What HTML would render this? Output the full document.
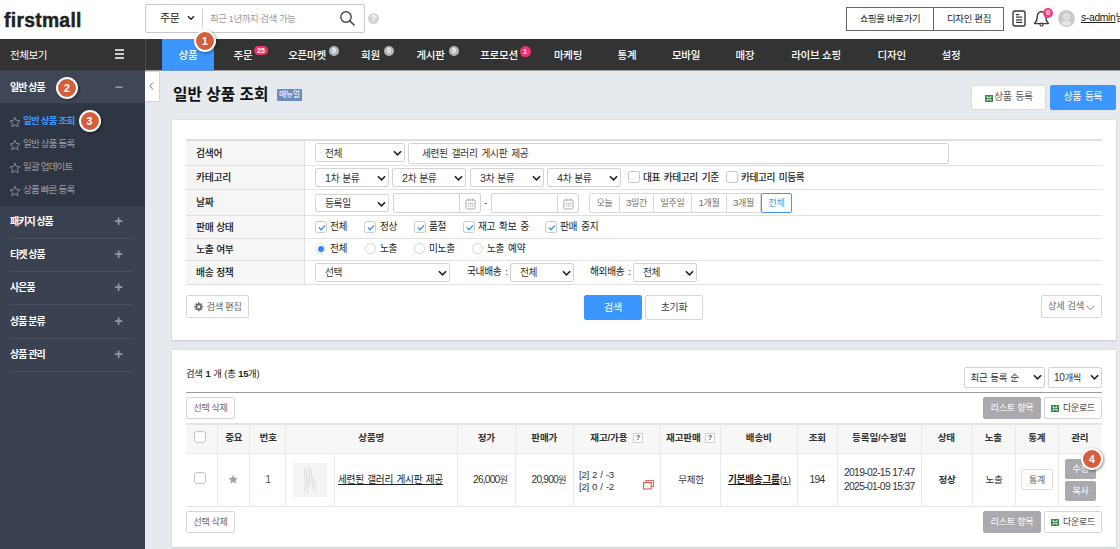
<!DOCTYPE html>
<html lang="ko">
<head>
<meta charset="utf-8">
<title>일반 상품 조회</title>
<style>
*{box-sizing:border-box;margin:0;padding:0}
html,body{width:1120px;height:549px;overflow:hidden;background:#e6e9ed}
body{font-family:"Liberation Sans","Noto Sans CJK KR",sans-serif;font-size:11px;color:#222;position:relative;letter-spacing:-0.3px}
.abs{position:absolute}
/* header */
#hd{position:absolute;left:0;top:0;width:1120px;height:39px;background:#fff}
#logo{position:absolute;left:4px;top:7.5px;font-size:19.3px;font-weight:bold;color:#222;letter-spacing:0.3px;line-height:26px;-webkit-text-stroke:0.45px #222}
#sbox{position:absolute;left:145px;top:4px;width:220px;height:29px;border:1px solid #c8c8c8;border-radius:2px;background:#fff}
#sbox .t1{position:absolute;left:14px;top:0;line-height:27px;font-size:11px;color:#222}
#sbox .car{position:absolute;left:41px;top:9px}
#sbox .sep{position:absolute;left:56px;top:4px;width:1px;height:19px;background:#d0d0d0}
#sbox .ph{position:absolute;left:64px;top:0;line-height:27px;font-size:9.5px;color:#9a9a9a;letter-spacing:-0.5px}
#sbox .mag{position:absolute;left:193px;top:5px}
#help{position:absolute;left:368px;top:13px;width:11px;height:11px;border-radius:50%;background:#d4d4d4;color:#fff;font-size:9px;line-height:11px;text-align:center;font-weight:bold;letter-spacing:0}
#hbtns{position:absolute;left:846px;top:7px;width:158px;height:24px;border:1px solid #666;background:#fff}
#hbtns span{position:absolute;top:0;line-height:22px;font-size:9.4px;text-align:center;color:#222}
#hbtns .a{left:0;width:87px;border-right:1px solid #666;height:22px}
#hbtns .b{left:87px;width:70px}
#uname{position:absolute;left:1081px;top:10.5px;font-size:10.3px;line-height:14px;white-space:nowrap;color:#222}
#uname u{text-decoration:underline}
/* nav */
#nav{position:absolute;left:0;top:39px;width:1120px;height:31px;background:#333}
#nav .vsep{position:absolute;left:145px;top:0;width:1px;height:31px;background:#4c4c4c}
#nav .all{position:absolute;left:10px;top:0;line-height:32px;color:#fff;font-size:10.5px;letter-spacing:-0.4px}
#nav .ham{position:absolute;left:114.5px;top:9.5px}
#nav .it{position:absolute;top:0;height:32px;line-height:32px;color:#fff;font-size:10.5px;white-space:nowrap;transform:translateX(-50%);letter-spacing:-0.25px;font-weight:500}
#nav .on{position:absolute;left:162px;top:0;width:52px;height:31px;background:#3b97ff}
.bdg{position:absolute;top:7px;height:10px;min-width:10px;border-radius:5px;font-size:7px;line-height:10px;color:#fff;text-align:center;font-weight:bold;letter-spacing:0;padding:0 2px}
.bdg.p{background:#f5306e}
.bdg.g{background:#b5b5b5}
/* sidebar */
#side{position:absolute;left:0;top:71px;width:145px;height:478px;background:#3a4150;box-shadow:0 -1px 0 #3f4757}
#side .h1{position:absolute;left:0;top:0;width:145px;height:32px;background:#3f4757}
#side .sub{position:absolute;left:0;top:32px;width:145px;height:103px;background:#2e3543}
#side .m{position:absolute;left:10px;color:#fff;font-size:10px;font-weight:bold;line-height:16px;white-space:nowrap;letter-spacing:-1px}
#side .s{position:absolute;left:23px;color:#9aa0ab;font-size:9.5px;line-height:16px;white-space:nowrap;letter-spacing:-0.8px}
#side .s.act{color:#3b97ff;font-weight:bold}
#side .star{position:absolute;left:8.5px}
#side .pl{position:absolute;left:113.5px;color:#9299a5;font-size:14px;line-height:15px;width:10px;text-align:center;font-weight:bold;letter-spacing:0}
#side .ln{position:absolute;left:10px;width:122px;height:1px;background:#4a5161}
/* annotation circles */
.num{position:absolute;width:22px;height:22px;border-radius:50%;background:#d65f3b;border:2px solid #fff;color:#fff;font-weight:bold;font-size:10.5px;line-height:18px;text-align:center;box-shadow:1px 1px 3px rgba(0,0,0,.45);letter-spacing:0}
/* main */
#fold{position:absolute;left:145px;top:71px;width:15px;height:31px;background:#fff;border:1px solid #d5d5d5;border-left:none;border-radius:0 2px 2px 0}
#title{position:absolute;left:173px;top:83.2px;font-size:15.7px;font-weight:bold;line-height:24px;color:#111;letter-spacing:0;white-space:nowrap}
#manual{position:absolute;left:276.5px;top:88.5px;width:25.5px;height:12px;background:#6a8dc0;color:#fff;font-size:8px;line-height:12px;text-align:center;border-radius:1px;letter-spacing:-0.5px}
.btn{position:absolute;background:#fff;border:1px solid #d6d6d6;border-radius:2px;font-size:10.5px;color:#333;text-align:center;white-space:nowrap}
.btn.blue{background:#3b97ff;border-color:#3b97ff;color:#fff}
.btn.gray{background:#a9a9ae;border-color:#a9a9ae;color:#fff}
.panel{position:absolute;left:172px;width:944px;background:#fff}

.panel{box-shadow:0 0 2px rgba(0,0,0,.10),0 1px 2px rgba(0,0,0,.10)}
.hl{position:absolute;left:186px;width:916px;height:1px;background:#e1e1e1}
.lab{position:absolute;left:186px;width:119px;background:#f6f6f6;border-right:1px solid #e1e1e1}
.lt{position:absolute;left:196px;font-size:9.8px;font-weight:500;color:#111;word-spacing:0.3px;line-height:14px;white-space:nowrap}
.sel{position:absolute;word-spacing:0.6px;height:19px;border:1px solid #d4d4d4;border-radius:2px;background:#fff;font-size:9.7px;line-height:19px;color:#333;padding-left:9px;white-space:nowrap}
.sel svg{position:absolute;right:2px;top:6px}
.inp{position:absolute;word-spacing:1.5px;height:20px;border:1px solid #d4d4d4;border-radius:2px;background:#fff;font-size:9.7px;line-height:18px;color:#333;white-space:nowrap}
.cb{position:absolute;width:11px;height:11px;border:1px solid #c4c4c4;border-radius:2px;background:#fff}
.cb svg{position:absolute;left:1px;top:1.5px}
.rd{position:absolute;width:11px;height:11px;border:1px solid #d4d4d4;border-radius:50%;background:#fff}
.rd.on{border-color:#d9dde3}
.rd.on i{position:absolute;left:1.5px;top:1.5px;width:6px;height:6px;border-radius:50%;background:#2f86f6;display:block}
.tx{position:absolute;word-spacing:1.5px;font-size:9.7px;line-height:14px;color:#222;white-space:nowrap}
.per{position:absolute;top:193px;height:20px;border:1px solid #d9d9d9;border-left:none;background:#fff;font-size:9px;line-height:18px;color:#707070;text-align:center;white-space:nowrap}

.vl{position:absolute;top:425px;width:1px;height:82px;background:#e9e9e9}
.th{position:absolute;top:430px;letter-spacing:-0.1px;font-size:9.5px;font-weight:bold;color:#333;line-height:16px;text-align:center;white-space:nowrap;transform:translateX(-50%)}
.td{position:absolute;font-size:9.5px;color:#333;line-height:14px;white-space:nowrap}
.tdc{transform:translateX(-50%);text-align:center}
.q{position:absolute;top:433px;width:10px;height:10px;border:1px solid #d0d0d0;background:#fff;font-size:7.5px;line-height:8px;text-align:center;color:#555;font-weight:bold;letter-spacing:0}
.n{font-size:1.1em}
</style>
</head>
<body>
<div id="hd">
  <div id="logo">firstmall</div>
  <div id="sbox">
    <span class="t1">주문</span>
    <svg class="car" width="8" height="8" viewBox="0 0 8 8"><path d="M1 2.2 L4 5.2 L7 2.2" fill="none" stroke="#222" stroke-width="1.5"/></svg>
    <span class="sep"></span>
    <span class="ph">최근 1년까지 검색 가능</span>
    <svg class="mag" width="17" height="17" viewBox="0 0 17 17"><circle cx="7" cy="7" r="5.2" fill="none" stroke="#444" stroke-width="1.4"/><path d="M10.8 10.8 L15 15" stroke="#444" stroke-width="1.6" stroke-linecap="round"/></svg>
  </div>
  <div id="help">?</div>
  <div id="hbtns"><span class="a">쇼핑몰 바로가기</span><span class="b">디자인 편집</span></div>
  <svg class="abs" style="left:1012.3px;top:10.2px" width="14" height="17" viewBox="0 0 14 17"><rect x="1" y="1" width="12" height="15" rx="1.8" fill="#fff" stroke="#3a3a3a" stroke-width="1.4"/><path d="M4 4.6h3.2M4 7.2h6.2M4 9.8h6.2M4 12.4h6.2" stroke="#3a3a3a" stroke-width="1.2"/></svg>
  <svg class="abs" style="left:1033px;top:10px" width="17" height="18" viewBox="0 0 17 18"><path d="M8.5 1.8 C5.4 1.8 4.2 4.4 4.2 7.2 C4.2 10.4 3.2 12 1.6 13.6 H15.4 C13.8 12 12.8 10.4 12.8 7.2 C12.8 4.4 11.6 1.8 8.5 1.8 Z" fill="none" stroke="#3a3a3a" stroke-width="1.4" stroke-linejoin="round"/><circle cx="8.5" cy="14.6" r="1.5" fill="#fff" stroke="#3a3a3a" stroke-width="1.2"/></svg>
  <div class="bdg p" style="left:1043.3px;top:7.8px;height:10px;min-width:10px;line-height:10px;border-radius:5px;background:#fb3d77">0</div>
  <svg class="abs" style="left:1058px;top:10.2px" width="17" height="17" viewBox="0 0 16 16"><circle cx="8" cy="8" r="8" fill="#cacaca"/><circle cx="8" cy="6.2" r="2.5" fill="#d2d2d2" stroke="#eee" stroke-width="1"/><path d="M3.4 13.2 C3.9 10.8 5.8 10.2 8 10.2 S12.1 10.8 12.6 13.2 A7 7 0 0 1 3.4 13.2Z" fill="#e6e6e6"/></svg>
  <div id="uname"><u>s-admin</u>님</div>
</div>

<div id="nav">
  <span class="all">전체보기</span>
  <svg class="ham" width="9" height="10" viewBox="0 0 9 10"><path d="M0 1h9M0 5h9M0 9h9" stroke="#fff" stroke-width="1.6"/></svg>
  <div class="vsep"></div><div class="on"></div>
  <span class="it" style="left:188px">상품</span>
  <span class="it" style="left:243px">주문</span><span class="bdg p" style="left:254px;width:14px;top:7px;height:9px;line-height:9px">25</span>
  <span class="it" style="left:307px">오픈마켓</span><span class="bdg g" style="left:329px">0</span>
  <span class="it" style="left:370.5px">회원</span><span class="bdg g" style="left:384px">0</span>
  <span class="it" style="left:430.5px">게시판</span><span class="bdg g" style="left:449px">0</span>
  <span class="it" style="left:499px">프로모션</span><span class="bdg p" style="left:519.5px;top:6.5px;height:11px;min-width:11px;line-height:11px;border-radius:6px;font-size:7.5px">1</span>
  <span class="it" style="left:568px">마케팅</span>
  <span class="it" style="left:627px">통계</span>
  <span class="it" style="left:686px">모바일</span>
  <span class="it" style="left:745px">매장</span>
  <span class="it" style="left:816px">라이브 쇼핑</span>
  <span class="it" style="left:891.7px">디자인</span>
  <span class="it" style="left:951px">설정</span>
</div>

<div class="abs" style="left:0;top:70px;width:1120px;height:1px;background:rgba(51,51,51,.42);z-index:3"></div><div class="abs" style="left:162px;top:70px;width:52px;height:1px;background:rgba(59,151,255,.55);z-index:3"></div>
<div id="side">
  <div class="h1"></div>
  <div class="sub"></div>
  <span class="m" style="top:9px">일반 상품</span><span class="pl" style="top:9px">−</span>
  <svg class="star" style="margin-top:-0.5px;top:45px" width="12" height="12" viewBox="0 0 24 24"><path d="M12 2.5l2.9 6.6 7.1.7-5.4 4.7 1.6 7L12 17.8 5.8 21.5l1.6-7L2 9.8l7.1-.7z" fill="none" stroke="#8c93a0" stroke-width="1.8" stroke-linejoin="round"/></svg><span class="s act" style="top:42px">일반 상품 조회</span>
  <svg class="star" style="margin-top:-0.5px;top:68px" width="12" height="12" viewBox="0 0 24 24"><path d="M12 2.5l2.9 6.6 7.1.7-5.4 4.7 1.6 7L12 17.8 5.8 21.5l1.6-7L2 9.8l7.1-.7z" fill="none" stroke="#8c93a0" stroke-width="1.8" stroke-linejoin="round"/></svg><span class="s" style="top:65px">일반 상품 등록</span>
  <svg class="star" style="margin-top:-0.5px;top:91px" width="12" height="12" viewBox="0 0 24 24"><path d="M12 2.5l2.9 6.6 7.1.7-5.4 4.7 1.6 7L12 17.8 5.8 21.5l1.6-7L2 9.8l7.1-.7z" fill="none" stroke="#8c93a0" stroke-width="1.8" stroke-linejoin="round"/></svg><span class="s" style="top:88px">일괄 업데이트</span>
  <svg class="star" style="margin-top:-0.5px;top:114px" width="12" height="12" viewBox="0 0 24 24"><path d="M12 2.5l2.9 6.6 7.1.7-5.4 4.7 1.6 7L12 17.8 5.8 21.5l1.6-7L2 9.8l7.1-.7z" fill="none" stroke="#8c93a0" stroke-width="1.8" stroke-linejoin="round"/></svg><span class="s" style="top:111px">상품 빠른 등록</span>
  <span class="m" style="top:143px">패키지 상품</span><span class="pl" style="top:143px">+</span>
  <div class="ln" style="top:167px"></div>
  <span class="m" style="top:176px">티켓 상품</span><span class="pl" style="top:176px">+</span>
  <div class="ln" style="top:200px"></div>
  <span class="m" style="top:209px">사은품</span><span class="pl" style="top:209px">+</span>
  <div class="ln" style="top:233px"></div>
  <span class="m" style="top:243px">상품 분류</span><span class="pl" style="top:243px">+</span>
  <div class="ln" style="top:267px"></div>
  <span class="m" style="top:276px">상품 관리</span><span class="pl" style="top:276px">+</span>
  <div class="ln" style="top:300px"></div>
</div>

<div id="fold"><svg class="abs" style="left:3px;top:9px" width="7" height="10" viewBox="0 0 7 10"><path d="M5 1.5 L1.8 5 L5 8.5" fill="none" stroke="#777" stroke-width="1"/></svg></div>
<div id="title">일반 상품 조회</div>
<div id="manual">매뉴얼</div>
<div class="btn" style="left:971px;top:85px;width:75px;height:25px;line-height:22.8px;padding-left:10px;font-size:9.7px;word-spacing:1.6px;color:#555;border-color:#dcdcdc"><svg width="8" height="7" viewBox="0 0 8 7" style="position:absolute;left:12.5px;top:9px"><rect x="0" y="0" width="8" height="7" fill="#3b8a49"/><path d="M1.6 1.5 L6.4 5.5 M6.4 1.5 L1.6 5.5" stroke="#d4ead7" stroke-width="1.3"/><path d="M0.8 3.5h6.4" stroke="#3b8a49" stroke-width="0.8"/></svg>상품 등록</div>
<div class="btn blue" style="left:1050px;top:85px;width:66px;height:25px;line-height:22.8px;font-size:9.7px;word-spacing:1.6px">상품 등록</div>

<!-- PANELS -->
<div class="panel" id="p1" style="top:120px;height:220px"></div>
<div class="panel" id="p2" style="top:350px;height:197px"></div>

<!-- P1 CONTENT -->
<div class="lab" style="top:141px;height:144px"></div>
<div class="hl" style="top:140px"></div>
<div class="hl" style="top:165px"></div>
<div class="hl" style="top:189px"></div>
<div class="hl" style="top:215px"></div>
<div class="hl" style="top:238px"></div>
<div class="hl" style="top:260px"></div>
<div class="hl" style="top:284px"></div>
<div class="hl" style="top:139px;height:2px;background:#e3e3e3"></div><div class="hl" style="top:140px;background:#d9d9d9"></div>
<span class="lt" style="top:146.7px">검색어</span>
<span class="lt" style="top:170.7px">카테고리</span>
<span class="lt" style="top:195.7px">날짜</span>
<span class="lt" style="top:220.7px">판매 상태</span>
<span class="lt" style="top:242.7px">노출 여부</span>
<span class="lt" style="top:265.7px">배송 정책</span>
<div class="sel" style="left:315px;top:143px;width:90px">전체<svg width="9" height="7" viewBox="0 0 9 7"><path d="M0.9 1.2 L4.5 4.8 L8.1 1.2" fill="none" stroke="#222" stroke-width="1.6"/></svg></div>
<div class="inp" style="left:408px;top:143px;width:541px;height:21px;line-height:19px;padding-left:13px">세련된 갤러리 게시판 제공</div>
<div class="sel" style="left:315px;top:168px;width:74px"><span class="n">1</span>차 분류<svg width="9" height="7" viewBox="0 0 9 7"><path d="M0.9 1.2 L4.5 4.8 L8.1 1.2" fill="none" stroke="#222" stroke-width="1.6"/></svg></div>
<div class="sel" style="left:392px;top:168px;width:74px"><span class="n">2</span>차 분류<svg width="9" height="7" viewBox="0 0 9 7"><path d="M0.9 1.2 L4.5 4.8 L8.1 1.2" fill="none" stroke="#222" stroke-width="1.6"/></svg></div>
<div class="sel" style="left:470px;top:168px;width:74px"><span class="n">3</span>차 분류<svg width="9" height="7" viewBox="0 0 9 7"><path d="M0.9 1.2 L4.5 4.8 L8.1 1.2" fill="none" stroke="#222" stroke-width="1.6"/></svg></div>
<div class="sel" style="left:547px;top:168px;width:74px"><span class="n">4</span>차 분류<svg width="9" height="7" viewBox="0 0 9 7"><path d="M0.9 1.2 L4.5 4.8 L8.1 1.2" fill="none" stroke="#222" stroke-width="1.6"/></svg></div>
<div class="cb" style="left:628px;top:171px;width:12px;height:12px;border-radius:2.5px"></div><span class="tx" style="left:643px;top:170.5px;font-weight:500;letter-spacing:-0.4px">대표 카테고리 기준</span>
<div class="cb" style="left:726px;top:171px;width:12px;height:12px;border-radius:2.5px"></div><span class="tx" style="left:741px;top:170.5px;font-weight:500;letter-spacing:-0.4px">카테고리 미등록</span>
<div class="sel" style="left:315px;top:194px;width:74px;height:18px;line-height:17px">등록일<svg width="9" height="7" viewBox="0 0 9 7"><path d="M0.9 1.2 L4.5 4.8 L8.1 1.2" fill="none" stroke="#222" stroke-width="1.6"/></svg></div>
<div class="inp" style="left:393px;top:193px;width:67px;border-radius:2px 0 0 2px"></div><div class="inp" style="left:459px;top:193px;width:22px;border-radius:0 2px 2px 0"><svg width="11" height="12" viewBox="0 0 11 12" style="position:absolute;left:5px;top:3.5px"><rect x="0.9" y="2" width="9.2" height="9" rx="1.6" fill="none" stroke="#a4a9b0" stroke-width="1"/><path d="M3.2 0.6v2.2M7.8 0.6v2.2" stroke="#a4a9b0" stroke-width="1"/><path d="M2.9 5.6h1.3M4.9 5.6h1.3M6.9 5.6h1.3M2.9 8h1.3M4.9 8h1.3M6.9 8h1.3" stroke="#a4a9b0" stroke-width="1.1"/></svg></div>
<span class="tx" style="left:484px;top:196px">-</span>
<div class="inp" style="left:491px;top:193px;width:67px;border-radius:2px 0 0 2px"></div><div class="inp" style="left:557px;top:193px;width:22px;border-radius:0 2px 2px 0"><svg width="11" height="12" viewBox="0 0 11 12" style="position:absolute;left:5px;top:3.5px"><rect x="0.9" y="2" width="9.2" height="9" rx="1.6" fill="none" stroke="#a4a9b0" stroke-width="1"/><path d="M3.2 0.6v2.2M7.8 0.6v2.2" stroke="#a4a9b0" stroke-width="1"/><path d="M2.9 5.6h1.3M4.9 5.6h1.3M6.9 5.6h1.3M2.9 8h1.3M4.9 8h1.3M6.9 8h1.3" stroke="#a4a9b0" stroke-width="1.1"/></svg></div>
<div class="per" style="left:589px;width:31px;border-left:1px solid #d9d9d9;border-radius:2px 0 0 2px;">오늘</div>
<div class="per" style="left:620px;width:34px;"><span class="n">3</span>일간</div>
<div class="per" style="left:654px;width:38px;">일주일</div>
<div class="per" style="left:692px;width:35px;"><span class="n">1</span>개월</div>
<div class="per" style="left:727px;width:34px;"><span class="n">3</span>개월</div>
<div class="per" style="left:761px;width:31px;border:1px solid #3b97ff;color:#3b97ff;border-radius:2px">전체</div>
<div class="cb" style="left:315px;top:221px;width:12px;height:12px;border-radius:2.5px;border-color:#cbcbcb"><svg width="8" height="7" viewBox="0 0 8 7" style="left:1.5px;top:2px"><path d="M0.8 3.4 L3 5.7 L7 1.4" fill="none" stroke="#2f8fff" stroke-width="1.35"/></svg></div><span class="tx" style="left:330px;top:219.7px">전체</span>
<div class="cb" style="left:364px;top:221px;width:12px;height:12px;border-radius:2.5px;border-color:#cbcbcb"><svg width="8" height="7" viewBox="0 0 8 7" style="left:1.5px;top:2px"><path d="M0.8 3.4 L3 5.7 L7 1.4" fill="none" stroke="#2f8fff" stroke-width="1.35"/></svg></div><span class="tx" style="left:380px;top:219.7px">정상</span>
<div class="cb" style="left:414px;top:221px;width:12px;height:12px;border-radius:2.5px;border-color:#cbcbcb"><svg width="8" height="7" viewBox="0 0 8 7" style="left:1.5px;top:2px"><path d="M0.8 3.4 L3 5.7 L7 1.4" fill="none" stroke="#2f8fff" stroke-width="1.35"/></svg></div><span class="tx" style="left:429px;top:219.7px">품절</span>
<div class="cb" style="left:463px;top:221px;width:12px;height:12px;border-radius:2.5px;border-color:#cbcbcb"><svg width="8" height="7" viewBox="0 0 8 7" style="left:1.5px;top:2px"><path d="M0.8 3.4 L3 5.7 L7 1.4" fill="none" stroke="#2f8fff" stroke-width="1.35"/></svg></div><span class="tx" style="left:478px;top:219.7px">재고 확보 중</span>
<div class="cb" style="left:545px;top:221px;width:12px;height:12px;border-radius:2.5px;border-color:#cbcbcb"><svg width="8" height="7" viewBox="0 0 8 7" style="left:1.5px;top:2px"><path d="M0.8 3.4 L3 5.7 L7 1.4" fill="none" stroke="#2f8fff" stroke-width="1.35"/></svg></div><span class="tx" style="left:560px;top:219.7px">판매 중지</span>
<div class="rd on" style="left:315px;top:243px"><i></i></div><span class="tx" style="left:330px;top:241.7px">전체</span>
<div class="rd" style="left:365px;top:243px"></div><span class="tx" style="left:380px;top:241.7px">노출</span>
<div class="rd" style="left:414px;top:243px"></div><span class="tx" style="left:429px;top:241.7px">미노출</span>
<div class="rd" style="left:472px;top:243px"></div><span class="tx" style="left:487px;top:241.7px">노출 예약</span>
<div class="sel" style="left:315px;top:263px;width:135px;height:19px;line-height:18px">선택<svg width="9" height="7" viewBox="0 0 9 7"><path d="M0.9 1.2 L4.5 4.8 L8.1 1.2" fill="none" stroke="#222" stroke-width="1.6"/></svg></div>
<span class="tx" style="left:467px;top:265px">국내배송 :</span>
<div class="sel" style="left:510px;top:263px;width:64px;height:19px;line-height:18px">전체<svg width="9" height="7" viewBox="0 0 9 7"><path d="M0.9 1.2 L4.5 4.8 L8.1 1.2" fill="none" stroke="#222" stroke-width="1.6"/></svg></div>
<span class="tx" style="left:590px;top:265px">해외배송 :</span>
<div class="sel" style="left:633px;top:263px;width:64px;height:19px;line-height:18px">전체<svg width="9" height="7" viewBox="0 0 9 7"><path d="M0.9 1.2 L4.5 4.8 L8.1 1.2" fill="none" stroke="#222" stroke-width="1.6"/></svg></div>
<div class="btn" style="left:186px;top:295px;width:63px;height:23px;line-height:21px;padding-left:13px;color:#666;font-size:9.4px;letter-spacing:-0.4px"><svg width="9.5" height="9.5" viewBox="0 0 10 10" style="position:absolute;left:7px;top:6px"><circle cx="5" cy="5" r="2.5" fill="none" stroke="#6a6a6a" stroke-width="1.7"/><path d="M5 0.3v1.9M5 7.8v1.9M0.3 5h1.9M7.8 5h1.9M1.7 1.7l1.3 1.3M7 7l1.3 1.3M1.7 8.3l1.3-1.3M7 3l1.3-1.3" stroke="#6a6a6a" stroke-width="1.7"/></svg>검색 편집</div>
<div class="btn blue" style="left:584px;top:295px;width:58px;height:25px;line-height:24px;font-size:10px">검색</div>
<div class="btn" style="left:645px;top:295px;width:58px;height:25px;line-height:24px;font-size:10px;color:#444">초기화</div>
<div class="btn" style="left:1041px;top:295px;width:61px;height:23px;line-height:21.5px;color:#666;padding-right:11px;font-size:9.2px;word-spacing:1px">상세 검색<svg width="9" height="6" viewBox="0 0 9 6" style="position:absolute;right:6.5px;top:8.5px"><path d="M0.7 0.8 L4.5 4.9 L8.3 0.8" fill="none" stroke="#777" stroke-width="0.9"/></svg></div>
<!-- /P1 CONTENT -->
<!-- P2 CONTENT -->
<div class="tx" style="left:186px;top:367.3px;font-size:9.4px;word-spacing:0.5px">검색 <b>1</b> 개 (총 <b>15</b>개)</div>
<div class="sel" style="left:964px;top:367px;width:81px;height:21px;line-height:19.5px;padding-left:5.5px;font-size:9.5px">최근 등록 순<svg width="9" height="7" viewBox="0 0 9 7"><path d="M0.9 1.2 L4.5 4.8 L8.1 1.2" fill="none" stroke="#222" stroke-width="1.6"/></svg></div>
<div class="sel" style="left:1048px;top:367px;width:54px;height:21px;line-height:19.5px;padding-left:5px;font-size:9.2px"><span class="n">10</span>개씩<svg width="9" height="7" viewBox="0 0 9 7"><path d="M0.9 1.2 L4.5 4.8 L8.1 1.2" fill="none" stroke="#222" stroke-width="1.6"/></svg></div>
<div class="hl" style="top:392px;background:#9a9a9a"></div>
<div class="btn" style="left:186px;top:397px;width:49px;height:22px;line-height:20.8px;font-size:9px;color:#666">선택 삭제</div>
<div class="btn gray" style="left:983px;top:397px;width:58px;height:22px;line-height:20.8px;font-size:9.2px">리스트 항목</div>
<div class="btn" style="left:1044px;top:397px;width:58px;height:22px;line-height:20.6px;font-size:9px;padding-left:12px;color:#444"><svg width="8" height="7" viewBox="0 0 8 7" style="position:absolute;left:6px;top:6.5px"><rect x="0" y="0" width="8" height="7" fill="#3b8a49"/><path d="M1.6 1.5 L6.4 5.5 M6.4 1.5 L1.6 5.5" stroke="#d4ead7" stroke-width="1.3"/><path d="M0.8 3.5h6.4" stroke="#3b8a49" stroke-width="0.8"/></svg>다운로드</div>
<div class="btn" style="left:186px;top:511px;width:49px;height:22px;line-height:20.8px;font-size:9px;color:#666">선택 삭제</div>
<div class="btn gray" style="left:983px;top:511px;width:58px;height:22px;line-height:20.8px;font-size:9.2px">리스트 항목</div>
<div class="btn" style="left:1044px;top:511px;width:58px;height:22px;line-height:20.6px;font-size:9px;padding-left:12px;color:#444"><svg width="8" height="7" viewBox="0 0 8 7" style="position:absolute;left:6px;top:6.5px"><rect x="0" y="0" width="8" height="7" fill="#3b8a49"/><path d="M1.6 1.5 L6.4 5.5 M6.4 1.5 L1.6 5.5" stroke="#d4ead7" stroke-width="1.3"/><path d="M0.8 3.5h6.4" stroke="#3b8a49" stroke-width="0.8"/></svg>다운로드</div>
<div class="abs" style="left:186px;top:423px;width:916px;height:31px;background:#f7f7f7;border-top:2px solid #e4e4e4"></div>
<div class="hl" style="top:453px;background:#e9e9e9"></div>
<div class="hl" style="top:506px;background:#e6e6e6"></div>
<div class="vl" style="left:217px"></div>
<div class="vl" style="left:249px"></div>
<div class="vl" style="left:285px"></div>
<div class="vl" style="left:457px"></div>
<div class="vl" style="left:515px"></div>
<div class="vl" style="left:573px"></div>
<div class="vl" style="left:660px"></div>
<div class="vl" style="left:720px"></div>
<div class="vl" style="left:797px"></div>
<div class="vl" style="left:837px"></div>
<div class="vl" style="left:921px"></div>
<div class="vl" style="left:972px"></div>
<div class="vl" style="left:1015px"></div>
<div class="vl" style="left:1058px"></div>
<div class="vl" style="left:334px;top:454px;height:53px"></div>
<span class="th" style="left:233.8px">중요</span>
<span class="th" style="left:268.2px">번호</span>
<span class="th" style="left:371.3px">상품명</span>
<span class="th" style="left:486.3px">정가</span>
<span class="th" style="left:544.3px">판매가</span>
<span class="th" style="left:608.8px">재고/가용</span>
<span class="th" style="left:683.3px">재고판매</span>
<span class="th" style="left:758.8px">배송비</span>
<span class="th" style="left:817.3px">조회</span>
<span class="th" style="left:879.3px">등록일/수정일</span>
<span class="th" style="left:946.3px">상태</span>
<span class="th" style="left:993.3px">노출</span>
<span class="th" style="left:1036.8px">통계</span>
<span class="th" style="left:1079.8px">관리</span>
<div class="q" style="left:633px">?</div><div class="q" style="left:705px">?</div>
<div class="cb" style="left:194px;top:431px;width:12px;height:12px;border-radius:3px"></div>
<div class="cb" style="left:194px;top:472px;width:12px;height:12px;border-radius:3px"></div>
<svg class="abs" style="left:228.3px;top:474.3px" width="10.5" height="10.5" viewBox="0 0 24 24"><path d="M12 1.5l3.2 7 7.6.8-5.7 5.1 1.6 7.5L12 18.1 5.3 21.9l1.6-7.5L1.2 9.3l7.6-.8z" fill="#a3a3a3"/></svg>
<span class="td tdc" style="left:268px;top:472px;font-size:10.5px;color:#555">1</span>
<div class="abs" style="left:293px;top:462.5px;width:34px;height:34px;background:#f4f4f4"><svg width="34" height="34" viewBox="0 0 34 34"><path d="M11.5 8 C11 3.5 17.5 3 18 7.5 L19.5 17.5 M11.5 8 L12.5 18.5 M13.5 6.5 L14.2 18 M16 6 L16.8 17.8 M12.5 18.5 C14 17 20 16.5 22.5 17.5 C21.5 20 14 20.5 12.5 18.5 M13 20 L11 29.5 M21.8 19 L22.8 28.5 M15.5 20.3 L14.5 30 M19.5 20 L20 26.5" fill="none" stroke="#d6d6d6" stroke-width="0.8"/></svg></div>
<span class="td" style="left:338px;top:472.5px;text-decoration:underline;color:#222;font-size:9.7px;word-spacing:1px">세련된 갤러리 게시판 제공</span>
<span class="td" style="left:473px;top:473px;font-size:9.3px"><span class="n" style="letter-spacing:-0.8px">26,000</span>원</span>
<span class="td" style="left:531.5px;top:473px;font-size:9.3px"><span class="n" style="letter-spacing:-0.8px">20,900</span>원</span>
<span class="td" style="left:579px;top:468.5px;line-height:12px;font-size:9.7px;word-spacing:0.8px">[2] 2 / -3<br>[2] 0 / -2</span>
<svg class="abs" style="left:643px;top:480px" width="11" height="10" viewBox="0 0 11 10"><rect x="2.8" y="0.6" width="7.6" height="6" fill="#fff" stroke="#e0574f" stroke-width="1"/><rect x="0.6" y="2.6" width="7.6" height="6.4" fill="#fff" stroke="#e0574f" stroke-width="1.1"/></svg>
<span class="td tdc" style="left:691px;top:473px">무제한</span>
<span class="td" style="left:728px;top:472.5px;text-decoration:underline;color:#222;font-size:9.7px"><b>기본배송그룹</b>(1)</span>
<span class="td tdc" style="left:817px;top:473px;font-size:10.2px;letter-spacing:-0.6px">194</span>
<span class="td" style="left:844px;top:466px;line-height:14px;font-size:10.3px;letter-spacing:-0.67px">2019-02-15 17:47<br>2025-01-09 15:37</span>
<span class="td tdc" style="left:947px;top:473px;font-weight:bold">정상</span>
<span class="td tdc" style="left:994px;top:473px">노출</span>
<div class="btn" style="left:1021px;top:469px;width:32px;height:21px;line-height:21px;font-size:9px;color:#666;border-color:#dedede">통계</div>
<div class="btn gray" style="left:1065px;top:459px;width:31px;height:20px;line-height:18px;font-size:9px">수정</div>
<div class="btn gray" style="left:1065px;top:481px;width:31px;height:20px;line-height:18px;font-size:9px">복사</div>
<!-- /P2 CONTENT -->
<div class="num" style="left:194px;top:30px">1</div>
<div class="num" style="left:56px;top:76.5px">2</div>
<div class="num" style="left:78.5px;top:109.5px">3</div>
<div class="num" style="left:1081px;top:448px">4</div>
</body>
</html>
